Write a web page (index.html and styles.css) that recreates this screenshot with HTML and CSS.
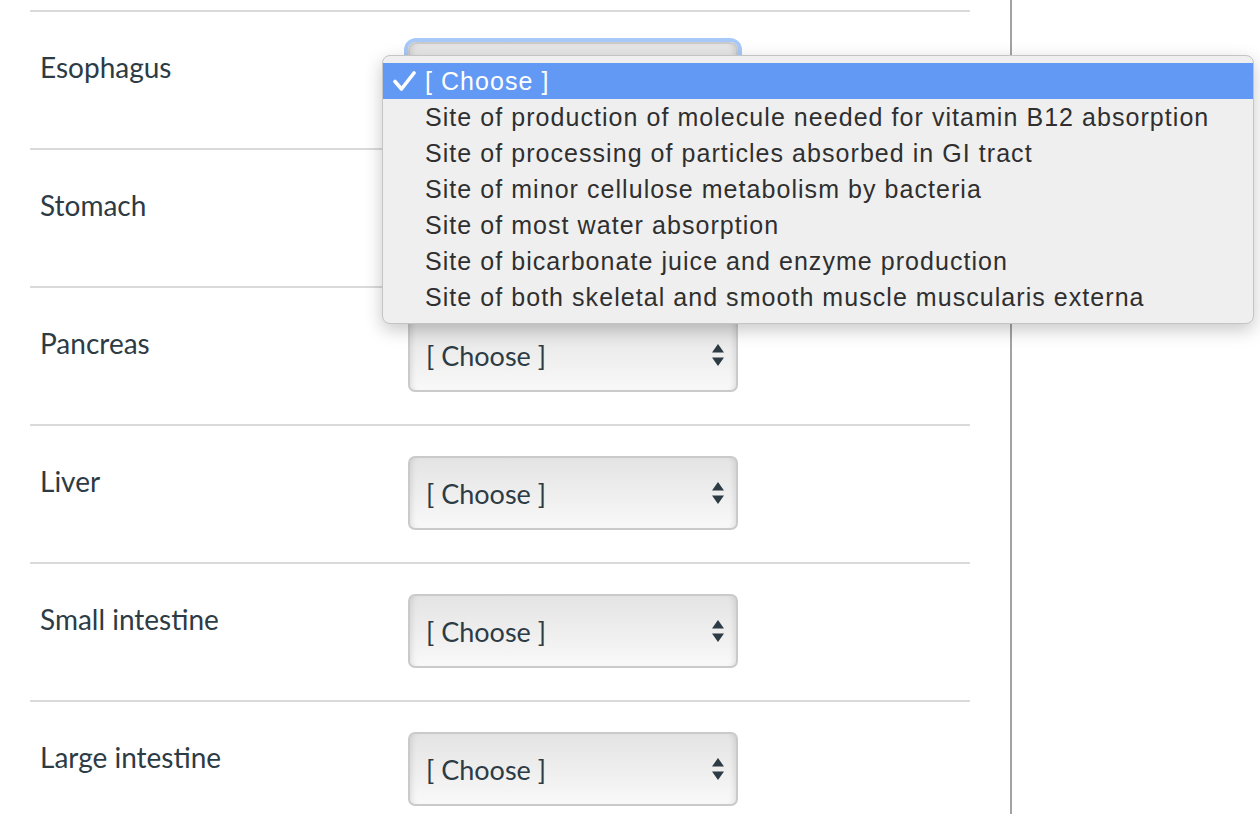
FILE: index.html
```html
<!DOCTYPE html>
<html lang="en">
<head>
<meta charset="utf-8">
<title>Matching question</title>
<link rel="stylesheet" href="styles.css">
</head>
<body>
<div class="page">
  <div class="content">
    <div class="answers">
      <div class="row">
        <div class="label">Esophagus</div>
        <div class="select-wrap focused">
          <div class="select"><span class="select-text"></span>
            <svg class="arrows" width="12" height="22" viewBox="0 0 12 22"><path d="M6 0 L12 8.5 L0 8.5 Z M0 13.5 L12 13.5 L6 22 Z" fill="#2d3b45"/></svg>
          </div>
          <div class="menu">
            <div class="option selected">
              <svg class="check" width="23" height="20" viewBox="0 0 23 20"><path d="M2 10.5 L8.5 18 L21 2" fill="none" stroke="#fff" stroke-width="3.6" stroke-linecap="round" stroke-linejoin="round"/></svg>
              <span>[ Choose ]</span>
            </div>
            <div class="option"><span>Site of production of molecule needed for vitamin B12 absorption</span></div>
            <div class="option"><span>Site of processing of particles absorbed in GI tract</span></div>
            <div class="option"><span>Site of minor cellulose metabolism by bacteria</span></div>
            <div class="option"><span>Site of most water absorption</span></div>
            <div class="option"><span>Site of bicarbonate juice and enzyme production</span></div>
            <div class="option"><span>Site of both skeletal and smooth muscle muscularis externa</span></div>
          </div>
        </div>
      </div>
      <div class="row">
        <div class="label">Stomach</div>
        <div class="select-wrap">
          <div class="select"><span class="select-text">[ Choose ]</span>
            <svg class="arrows" width="12" height="22" viewBox="0 0 12 22"><path d="M6 0 L12 8.5 L0 8.5 Z M0 13.5 L12 13.5 L6 22 Z" fill="#2d3b45"/></svg>
          </div>
        </div>
      </div>
      <div class="row">
        <div class="label">Pancreas</div>
        <div class="select-wrap">
          <div class="select"><span class="select-text">[ Choose ]</span>
            <svg class="arrows" width="12" height="22" viewBox="0 0 12 22"><path d="M6 0 L12 8.5 L0 8.5 Z M0 13.5 L12 13.5 L6 22 Z" fill="#2d3b45"/></svg>
          </div>
        </div>
      </div>
      <div class="row">
        <div class="label">Liver</div>
        <div class="select-wrap">
          <div class="select"><span class="select-text">[ Choose ]</span>
            <svg class="arrows" width="12" height="22" viewBox="0 0 12 22"><path d="M6 0 L12 8.5 L0 8.5 Z M0 13.5 L12 13.5 L6 22 Z" fill="#2d3b45"/></svg>
          </div>
        </div>
      </div>
      <div class="row">
        <div class="label">Small intestine</div>
        <div class="select-wrap">
          <div class="select"><span class="select-text">[ Choose ]</span>
            <svg class="arrows" width="12" height="22" viewBox="0 0 12 22"><path d="M6 0 L12 8.5 L0 8.5 Z M0 13.5 L12 13.5 L6 22 Z" fill="#2d3b45"/></svg>
          </div>
        </div>
      </div>
      <div class="row">
        <div class="label">Large intestine</div>
        <div class="select-wrap">
          <div class="select"><span class="select-text">[ Choose ]</span>
            <svg class="arrows" width="12" height="22" viewBox="0 0 12 22"><path d="M6 0 L12 8.5 L0 8.5 Z M0 13.5 L12 13.5 L6 22 Z" fill="#2d3b45"/></svg>
          </div>
        </div>
      </div>
    </div>
  </div>
  <div class="aside"></div>
</div>
</body>
</html>
```

FILE: styles.css
```css
html, body {
  margin: 0;
  padding: 0;
  background: #fff;
  height: 100%;
  overflow: hidden;
}

.page {
  display: flex;
  height: 814px;
  font-family: Lato, "Liberation Sans", sans-serif;
  color: #2d3b45;
}

.content {
  width: 1012px;
  border-right: 2px solid #a3a3a3;
  padding: 10px 40px 0 30px;
  box-sizing: border-box;
  flex: none;
}

.aside {
  flex: 1;
}

.row {
  border-top: 2px solid #dadada;
  height: 138px;
  box-sizing: border-box;
  padding: 30px 0 0 10px;
  display: grid;
  grid-template-columns: 368px 330px;
  align-items: start;
}

.label {
  font-size: 28px;
  line-height: 36px;
  margin-top: 7px;
}

.select-wrap {
  position: relative;
  width: 330px;
}

.select {
  height: 74px;
  box-sizing: border-box;
  border: 2px solid #cacaca;
  border-radius: 7px;
  background: linear-gradient(#e4e4e4, #efefef 55%, #f9f9f9);
  box-shadow: inset 6px 0 6px -5px rgba(0,0,0,0.12), inset -6px 0 6px -5px rgba(0,0,0,0.12);
  display: flex;
  align-items: center;
  justify-content: space-between;
  padding: 0 12px 0 16px;
}

.select-text {
  font-size: 27px;
}

.arrows {
  display: block;
}

.focused .select {
  box-shadow: 0 0 0 4px #a7c9f8, inset 6px 0 6px -5px rgba(0,0,0,0.12), inset -6px 0 6px -5px rgba(0,0,0,0.12);
  border-radius: 8px;
}

.menu {
  position: absolute;
  left: -26px;
  top: 13px;
  width: 872px;
  box-sizing: border-box;
  padding: 7px 0 8px;
  background: #efefef;
  border: 1px solid #c4c4c4;
  border-radius: 8px;
  box-shadow: 0 6px 18px rgba(0,0,0,0.22);
  font-family: "Liberation Sans", Arial, sans-serif;
  font-size: 25px;
  letter-spacing: 1.05px;
  color: #2f2f2f;
  z-index: 10;
}

.option {
  height: 36px;
  display: flex;
  align-items: center;
  padding-left: 42px;
  position: relative;
  white-space: nowrap;
}

.option.selected {
  background: #6199f4;
  color: #fff;
}

.check {
  position: absolute;
  left: 10px;
  top: 8px;
}
```
